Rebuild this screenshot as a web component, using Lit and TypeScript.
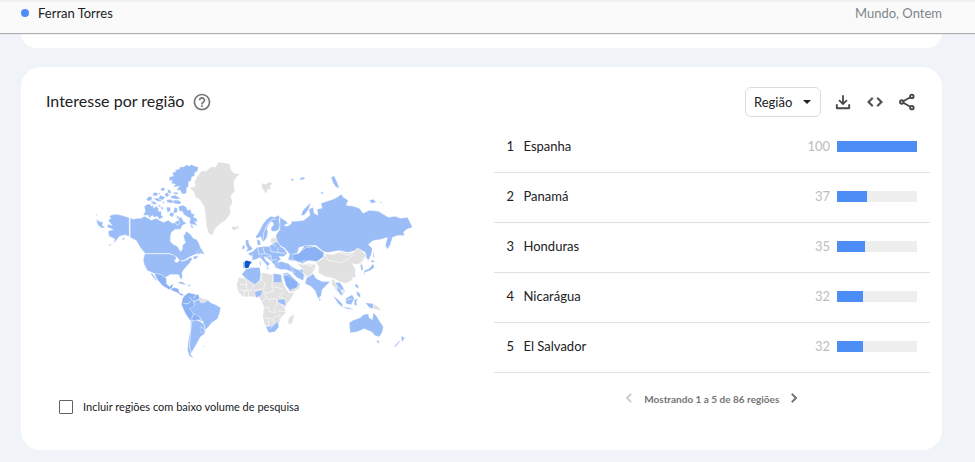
import { LitElement, html, svg, css } from "lit";
import { customElement, property } from "lit/decorators.js";

interface Region {
  name: string;
  value: number;
}

const REGIONS: Region[] = [
  { name: "Espanha", value: 100 },
  { name: "Panamá", value: 37 },
  { name: "Honduras", value: 35 },
  { name: "Nicarágua", value: 32 },
  { name: "El Salvador", value: 32 },
];

// Countries with data, light shade
const LAND = [
  // Alaska and the Aleutians
  "M109 221L112 219L110 217L113 215.5L118 215L124 216.5L130 218.5V237L126 235.5L123 236L120 237L118 240L114 244.5L116 240L113 238L110 237L109 232L114 230L108 228L109 225L113 226Z",
  "M97 220L100 222L104 223L103 226L106 228L103 229L99 226ZM97 214.500l1.500 1l-1 1zM109 246l4-2l-2 2.500zM123 239l3-1l-2 3z",
  // Canada mainland
  "M131 218.500L134 220L138 219L142 219L145 217L149 219L152 221L157 219L160 221L164 223L169 221L173 224L176 223L178 226L180 223L179 219L182 218L184 222L187 224L183 226L181 230L176 230L172 233L171 237L171 242L174 245L178 247L181 252L183 250L183 246L186 243L184 237L187 232L191 235L194 239L197 240L199 243L201 248L203 252L198 254L193 256L189 258L184 261L180 261L178 258L173 255L170 254L146 254L141 248L137 241L131 238Z",
  "M197 252l5-3l3 6l-3-1l-4 1zM194 257l5-1l-2 3l-3 1z",
  // Arctic archipelago
  "M177 172L175 171L180 170L180 168L184 168L187 166L190 167L192 165.500L195 167L199 168L198 172L195 174L195 177L192 178L192 181L189 183L189 187L187 189L187 193L185 195L182 194L181 191L177 191L180 187L174 188L176 185L172 184L173 181L170 182L170 178L174 177L173 174Z",
  "M145 207L148 205L151 205L152 207L154 206L154 209L157 207L159 209L159 212L162 212L162 216L164 218L160 220L158 217L155 218L153 216L150 219L149 216L144 216L146 212Z",
  "M147 200l3-3l3 1l-1 3l-3 1zM153 196l2-3l4 1l-2 3zM151 202l4 0l3 3l-4 0zM154 199l5 0l4 3l-5 0zM159 199l2-3l5 2l-3 3zM161 190l3-2l2 2l-3 2zM165 195l3-2l2 3l-3 2zM168 190l3 1l1 3l-3 0zM167 201l4-1l3 2l-1 2l-5-1zM174 201l5 0l3 2l-2 2l-6-1zM171 197l5-1l5 3l-3 1l-6-1zM167 208l4 0l0 4l-3 1zM171 213l4 1l-2 4l-3-2zM175 208l3 1l0 4l-4 1zM158 205l4 2l-2 1zM161 208l3 0l-1 3zM163 202l2 1l-1 2zM153 203l1 1l-2 1zM160 193l1 2l-2 0zM174 193l4 0l1 2l-4 0z",
  "M179 207L184 206L187 208L188 211L191 210L192 214L195 215L194 218L197 219L198 223L195 222L198 227L194 225L192 226L190 223L191 219L187 217L184 215L183 212L180 212ZM175 223l4-2l2 3l-3 2zM190 226l4 1l-1 2zM177 216l3 2l-2 2z",
  // United States
  "M145.500 254.500H170L175 256L177 258L175 262L178 263L180 260L183 262L188 260L191 258L193 259L190 264L186 268L182.500 273L183 278L181.500 280L179 275L175 275L171 275L166 278L162 275L155 274L148 271L145 265L144 260Z",
  // Brazil, Argentina, Chile
  "M199 300L204 301L208 300L211 303L216 305L221 308L220 313L218 319L212 323L209 327L206 330L205 326L203 322L199 318L193 313L189 310L192 306L195 306L194 302Z",
  "M191 322L195 320L199 321L204 324L206 330L205 334L201 337L198 342L196 346L193 351L191 354L194 358L190 356L188 350L189 340L191 330ZM203 346l2 0l0 1z",
  // Cuba and the Caribbean
  "M178 283l4-1l5 3l-3 0l-4-1zM188 285l4 1l-3 1zM194 286l2 1",
  // Norway, Sweden, Finland
  "M256 237L259 233L261 229L263 225L267 220L271 217L275 218L278 216L280 218L279 220L280 226L279 230L276 232L272 232L271 229L274 225L272 222L269 225L267 229L268 233L267 238L264 242L262 241L261 237L257 239Z",
  "M257 240l3 1l1 4l-3 1z",
  // British Isles
  "M246 240l3 1l0 3l2 3l2 2l-2 2l-5 1l2-3l-2-4zM243 246l2 0l0 3l-3 1z",
  // Continental Europe
  "M248 254L253 252L257 248L264 247L269 247L273 244L277 242L280 246L285 250L287 254L284 257L279 257L281 260L278 262L279 265L277 268L274 265L271 261L268 259L264 257L266 261L270 264L268 267L264 262L260 258L256 260L252 261L252 257ZM266 268l3 0l-1 2zM260 262l1 0l0 4l-1 0z",
  // Turkey
  "M275 264L281 262L288 264L292 267L295 273L291 272L286 270L281 270L275 268Z",
  // Russia
  "M280 218L285 221L288 224L284 226L287 227L291 225L292 222L296 222L304 221L310 216L309 210L313 208L314 214L318 216L317 210L322 209L321 204L327 202L333 200L337 198L341 195L343 198L348 201L346 206L353 207L359 209L363 214L369 211L378 212L388 218L395 217L400 219L407 218L412 228L406 230L403 233L404 236L397 236L392 238L390 245L387 250L385 246L387 238L380 240L373 241L368 245L372 249L371 255L368 261L366 258L365 253L358 249L355 251L348 253L339 251L333 252L328 253L323 252L316 246L307 246L299 248L297 255L294 262L288 260L290 255L285 249L280 246L277 241L276 236L280 230L280 225Z",
  "M301 216l2-5l8-8l-3 8l-4 5zM331 178l3-1l3 6l2 6l-3-1l-3-4zM369 201l4-1l3 3l-5 1zM379 203l3 0l-1 1zM373 250l1 7l-1 3zM290 180l4 0l-1 2zM300 179l4-1l1 2l-5 1zM321 192l3 2l-3 1zM406 214l2 0",
  // Iran, Arabia
  "M290 266L297 270L303 270L305 276L303 281L297 278L293 274ZM283 274L288 273L296 281L300 285L296 289L290 292L286 285Z",
  // Pakistan, India
  "M305 284L307 277L313 274L316 279L322 282L330 282L326 286L322 290L321 296L318 299L315 291L311 287ZM319 298l2 2l-2 1z",
  // Mainland and maritime southeast Asia
  "M335 283l5 0l3 5l2 4l-4 4l-3-4l-3-3zM333 296l4 3l5 5l1 4l-5-4zM342 307l7 1l5 2l-8-1zM345 299l7-4l2 4l-3 6l-5-1zM354 300l4-1l-2 3l1 4l-3-1zM355 284l3 2l0 3l-3-2zM356 291l4 3l0 4l-3-2zM365 303l8 1l0 5l-4-1zM353 277l2-2l0 3z",
  // Korea, Japan
  "M360 265l2 0l1 5l-2 1zM371 260l4 2l-4 1zM373 264l1 4l-4 3l-6 2l0-2l5-2zM363 273l2 0l-1 2z",
  // Australia, New Zealand
  "M349 323L352 321L357 319L360 318L363 315L368 314L369 318L372 320L373 313L376 316L379 321L383 327L382 332L379 337L375 336L371 332L364 329L357 332L350 333ZM376 341l3 0l-1 3zM401 336l3 2l-2 4l-1-2zM400 341l-5 6l-1-1l5-5zM393 315l2 2",
];

// African countries with data, drawn over the rest of the continent
const LAND_AFRICA =
  "M242 275L246 270L252 268L260 268L261 275L260 281L255 285L246 279ZM273.500 274L281 275L282 283H273.500ZM255 292L263 290L261 296L256 298ZM278 300L285 299L286 306L278 303ZM266 327L272 326L278 322L279 327L275 332L269 333Z";

// Countries with a slightly stronger shade
const LAND_MID = [
  "M152 273L156 278L158 282L156 280L152 275ZM155 274L162 275L167 279L167 284L170 287L174 284L173 288L170 290L163 286L158 280Z",
  "M171 289l4-1l4 1l1 4l5 2l-3 1l-4-3l-5-2z",
  "M185 296L189 293L193 294L199 295L200 299L194 302L195 306L190 309L194 314L200 317L203 322L199 320L194 321L191 321L186 314L182 305L183 299ZM201 327l4 3l-3 3z",
  "M292 255L299 254L305 246L315 247L324 253L323 258L317 262L308 261L302 264L294 261Z",
  "M283 275L290 277L298 283L297 288L290 290L286 286Z",
];

// Countries without data
const LAND_EMPTY = [
  // Greenland
  "M190 189L196 187L195 183L198 177L202 172L207 172L211 168L216 168L219 163L225 164L230 165L231 170L234 174L240 175L236 179L234 183L235 192L231 197L233 203L230 208L231 214L226 221L220 225L215 230L213 236L209 234L207 227L206 218L205 208L200 200L196 198L194 192Z",
  "M232 228l2-1l2 1l3-2l0 3l-4 2l-3-1zM262 184l4 1l3-2l4 1l-3 3l1 3l-3 0l-2 5l-2-4l-2-2z",
  // Baltic states
  "M271 239l5-1l1 4l-4 2l-2-2z",
  // Africa
  "M239 278L246 279L255 285L261 281L262 273L273 275L282 275L283 283L286 289L289 293L294 293L291 299L287 304L285 308L286 313L281 318L280 322L277 325L268 327L265 325L263 317L264 307L261 300L258 297L250 297L243 297L238 291L237 285ZM294 314l-1 7l-2 4l-3-2l1-5z",
  // Guianas
  "M199 297l5 2l5 1l-4 3l-4 0z",
  // Central Asia, Afghanistan
  "M297 264L303 265L308 264L316 265L314 272L309 277L304 276L303 270ZM291 291l6-3l4-5l-2 6l-7 4z",
  // China, Mongolia
  "M316 263L323 259L325 254L332 255L340 252L349 254L354 252L356 249L360 250L366 256L362 262L357 265L352 264L355 269L355 275L351 281L346 284L339 282L334 279L325 277L318 273L319 268ZM331 280l3 0l3 7l0 5l-2-4l-3-2zM341 290l4 0l-2 4l-2-1z",
  "M373 304l5 3l3 4l-4-1l-4-1zM359 264l2-1l1 3z",
];

const SPAIN = "M245 262L247 261L252 262.500L250 265L249 268L246 269L245 267Z";

const BORDERS =
  "M252 261L253 255M258 248L259 255M263 248L265 254L271 256M270 247L271 252L278 253L285 254M259 255L265 254M271 256L272 261L277 260M265 258L271 257M278 248L278 253M263 241L264 233L267 226L272 220L276 220M271 244L276 247M280 247L285 249M258 260L262 256" +
  "M291 260L300 263L305 261M293 255L299 253L306 248L316 247L325 254L333 255L338 253L349 256L355 252M325 255L328 261L341 263L349 259L354 255M366 256L361 261M317 262L323 258" +
  "M299 296L297 293M283 276L289 274M298 270L304 274L307 278L312 275L316 266M304 276L304 282M316 274L324 280L332 281M308 264L313 269M303 264L308 266L314 265" +
  "M246 279L247 285L240 285M247 284L247 291L239 290M254 285L252 290L244 292M244 297L245 292M249 297L249 292M262 280L265 283L264 289L254 291M273 276L272 287L274 291L266 294L263 290M272 287L283 289M265 294L268 300L277 299M266 298L263 302M277 300L277 306L274 309L276 313L270 312L269 308L264 308M284 292L279 297L286 300M279 303L285 307L286 312L278 311M264 318L274 319L274 325L270 329M274 318L278 316M269 319L269 327M280 314L280 320M242 275L246 279" +
  "M190 297L193 301L196 302M184 304L189 304L191 301M194 314L192 319L194 322M200 317L204 323M192 322L191 333L190 347L192 354M197 294L194 299" +
  "M202 327L206 331M336 285L340 290L345 293M344 301L352 299";

const ICONS = {
  help: svg`<path d="M11 18h2v-2h-2v2zm1-16C6.480 2 2 6.480 2 12s4.480 10 10 10 10-4.480 10-10S17.520 2 12 2zm0 18c-4.410 0-8-3.590-8-8s3.590-8 8-8 8 3.590 8 8-3.590 8-8 8zm0-14c-2.210 0-4 1.790-4 4h2c0-1.100.9-2 2-2s2 .9 2 2c0 2-3 1.750-3 5h2c0-2.250 3-2.500 3-5 0-2.210-1.790-4-4-4z"/>`,
  download: svg`<path d="M10.800 3h2.400v9l3.300-3.300 1.600 1.600-6.100 6.100-6.100-6.100 1.600-1.600 3.300 3.300zM2.500 15h2.500v4h14v-4h2.500v4.500a2 2 0 0 1-2 2h-15a2 2 0 0 1-2-2z"/>`,
  embed: svg`<path d="M9.400 16.600 4.800 12l4.600-4.600L8 6l-6 6 6 6 1.400-1.400zm5.200 0 4.600-4.600-4.600-4.600L16 6l6 6-6 6-1.400-1.400z" stroke="currentColor" stroke-width="1"/>`,
  share: svg`<g fill="none" stroke="currentColor" stroke-width="2.500"><circle cx="18.500" cy="4.500" r="2.300"/><circle cx="5" cy="12" r="2.300"/><circle cx="18.500" cy="19.500" r="2.300"/><path d="M7 11l9.400-5.300M7 13l9.400 5.300"/></g>`,
  prev: svg`<path d="M15.410 7.410 14 6l-6 6 6 6 1.410-1.410L10.830 12z" stroke="currentColor"/>`,
  next: svg`<path d="M10 6 8.590 7.410 13.170 12l-4.580 4.590L10 18l6-6z" stroke="currentColor"/>`,
};

@customElement("trend-icon")
class TrendIcon extends LitElement {
  @property() name: keyof typeof ICONS = "help";

  static styles = css`
    :host { display: block; width: 20px; height: 20px; }
    .glyph { display: block; width: 100%; height: 100%; fill: currentColor; }
  `;

  render() {
    return html`<svg class="glyph" viewBox="0 0 24 24" aria-hidden="true">${ICONS[this.name]}</svg>`;
  }
}

@customElement("world-map")
class WorldMap extends LitElement {
  static styles = css`
    :host { display: block; }
    .map { display: block; width: 100%; height: auto; }
    .land { stroke: #ffffff; stroke-width: 0.3; stroke-linejoin: round; }
    .light { fill: #9bbdf7; }
    .mid { fill: #8bb2f4; }
    .empty { fill: #e1e1e1; }
    .top { fill: #0b57d0; }
    .borders { fill: none; stroke: #ffffff; stroke-width: 0.6; stroke-linejoin: round; }
  `;

  render() {
    return html`<svg class="map" viewBox="90 155 330 210" role="img" aria-label="Mapa de interesse por região">
      <path class="land light" d=${LAND.join("")}></path>
      <path class="land empty" d=${LAND_EMPTY.join("")}></path>
      <path class="land mid" d=${LAND_MID.join("")}></path>
      <path class="land light" d=${LAND_AFRICA}></path>
      <path class="light" d="M243.500 262.500h1.500v6h-1.500z"></path>
      <path class="borders" d=${BORDERS}></path>
      <path class="top" d=${SPAIN}></path>
    </svg>`;
  }
}

@customElement("region-table")
class RegionTable extends LitElement {
  @property({ attribute: false }) rows: Region[] = [];

  static styles = css`
    :host { display: block; }
    .table { width: 100%; border-collapse: separate; border-spacing: 0; table-layout: fixed; }
    .cell { box-sizing: border-box; height: 50px; padding: 0 0 3px; border-bottom: 1px solid #e0e0e0; font-size: 13px; line-height: 20px; text-align: left; font-weight: 400; color: #202124; }
    .rank { width: 30px; padding-left: 13px; }
    .value { width: 60px; text-align: right; color: #bdbdbd; }
    .meter { width: 100px; padding-left: 7px; }
    .track { width: 80px; height: 11px; background: #eeeeee; }
    .fill { height: 11px; background: #4d8df6; }
  `;

  render() {
    return html`<table class="table">
      <tbody>
        ${this.rows.map(
          (r, i) => html`<tr>
            <td class="cell rank">${i + 1}</td>
            <th class="cell" scope="row">${r.name}</th>
            <td class="cell value">${r.value}</td>
            <td class="cell meter"><div class="track"><div class="fill" style="width:${r.value}%"></div></div></td>
          </tr>`
        )}
      </tbody>
    </table>`;
  }
}

@customElement("app-root")
class AppRoot extends LitElement {
  static styles = css`
    :host { display: block; min-height: 100vh; box-sizing: border-box; padding-bottom: 11px; background: #f0f4f9; color: #202124; font-family: Lato, "Open Sans", sans-serif; font-size: 13px; overflow: hidden; }
    .topbar { position: relative; display: flex; justify-content: space-between; align-items: center; box-sizing: border-box; height: 33px; padding: 0 33px 7px 21px; background: linear-gradient(#eeeeee, #fafafa 3px); box-shadow: 0 1px 1px #b0b0b0; }
    .term { display: flex; align-items: center; gap: 9px; }
    .dot { width: 8px; height: 8px; border-radius: 50%; background: #4d8df6; }
    .scope { color: #80868b; }
    .card { margin: 0 33px 0 21px; background: #ffffff; border-radius: 20px; }
    .previous { height: 15px; border-radius: 0 0 20px 20px; }
    .main { margin-top: 19px; padding-top: 20px; padding-bottom: 36px; }
    .head { display: flex; align-items: center; height: 30px; padding: 0 26px 0 25px; }
    .title { margin: 0; padding-bottom: 2px; font-size: 16px; line-height: 24px; font-weight: 400; }
    .button { display: block; padding: 0 0 1px; border: 0; background: none; color: #444746; }
    .button.help { margin-left: 8px; color: #757575; }
    .tools { display: flex; align-items: center; gap: 14px; margin-left: auto; }
    .small { width: 18px; height: 18px; }
    .picker { position: relative; display: flex; align-items: center; margin-right: -1px; }
    .select { appearance: none; box-sizing: border-box; width: 76px; height: 30px; padding: 0 24px 0 8px; border: 1px solid #dadce0; border-radius: 6px; background: #ffffff; color: #202124; font: inherit; }
    .caret { position: absolute; right: 10px; border: 4px solid transparent; border-top-color: #202124; border-bottom: 0; pointer-events: none; }
    .columns { display: grid; grid-template-columns: 1fr 1fr; padding-top: 6px; }
    .left { padding-top: 31px; }
    .map { width: 72%; margin-left: 68px; }
    .option { display: flex; align-items: center; gap: 10px; height: 14px; margin: 35px 0 0 38px; font-size: 11px; }
    .box { appearance: none; box-sizing: border-box; width: 14px; height: 14px; margin: 0; border: 1px solid #5f6368; border-radius: 1px; background: #ffffff; }
    .box:checked { background: #4d8df6; }
    .right { padding: 0 12px; }
    .pager { display: flex; justify-content: center; align-items: center; gap: 6px; margin-top: 16px; color: #757575; font-size: 10px; font-weight: 700; }
    .button.step { color: #757575; }
    .button.step:disabled { color: #d0d0d0; }
  `;

  render() {
    return html`
      <header class="topbar">
        <span class="term"><span class="dot"></span>Ferran Torres</span>
        <span class="scope">Mundo, Ontem</span>
      </header>
      <div class="card previous"></div>
      <section class="card main">
        <div class="head">
          <h2 class="title">Interesse por região</h2>
          <button class="button help" aria-label="Ajuda"><trend-icon name="help"></trend-icon></button>
          <div class="tools">
            <div class="picker">
              <select class="select" aria-label="Resolução"><option>Região</option></select>
              <span class="caret"></span>
            </div>
            <button class="button" aria-label="Baixar"><trend-icon class="small" name="download"></trend-icon></button>
            <button class="button" aria-label="Incorporar"><trend-icon class="small" name="embed"></trend-icon></button>
            <button class="button" aria-label="Compartilhar"><trend-icon class="small" name="share"></trend-icon></button>
          </div>
        </div>
        <div class="columns">
          <div class="left">
            <world-map class="map"></world-map>
            <label class="option"><input class="box" type="checkbox" />Incluir regiões com baixo volume de pesquisa</label>
          </div>
          <div class="right">
            <region-table .rows=${REGIONS}></region-table>
            <nav class="pager" aria-label="Páginas">
              <button class="button step" disabled aria-label="Anterior"><trend-icon class="small" name="prev"></trend-icon></button>
              <span>Mostrando 1 a 5 de 86 regiões</span>
              <button class="button step" aria-label="Próxima"><trend-icon class="small" name="next"></trend-icon></button>
            </nav>
          </div>
        </div>
      </section>
    `;
  }
}
